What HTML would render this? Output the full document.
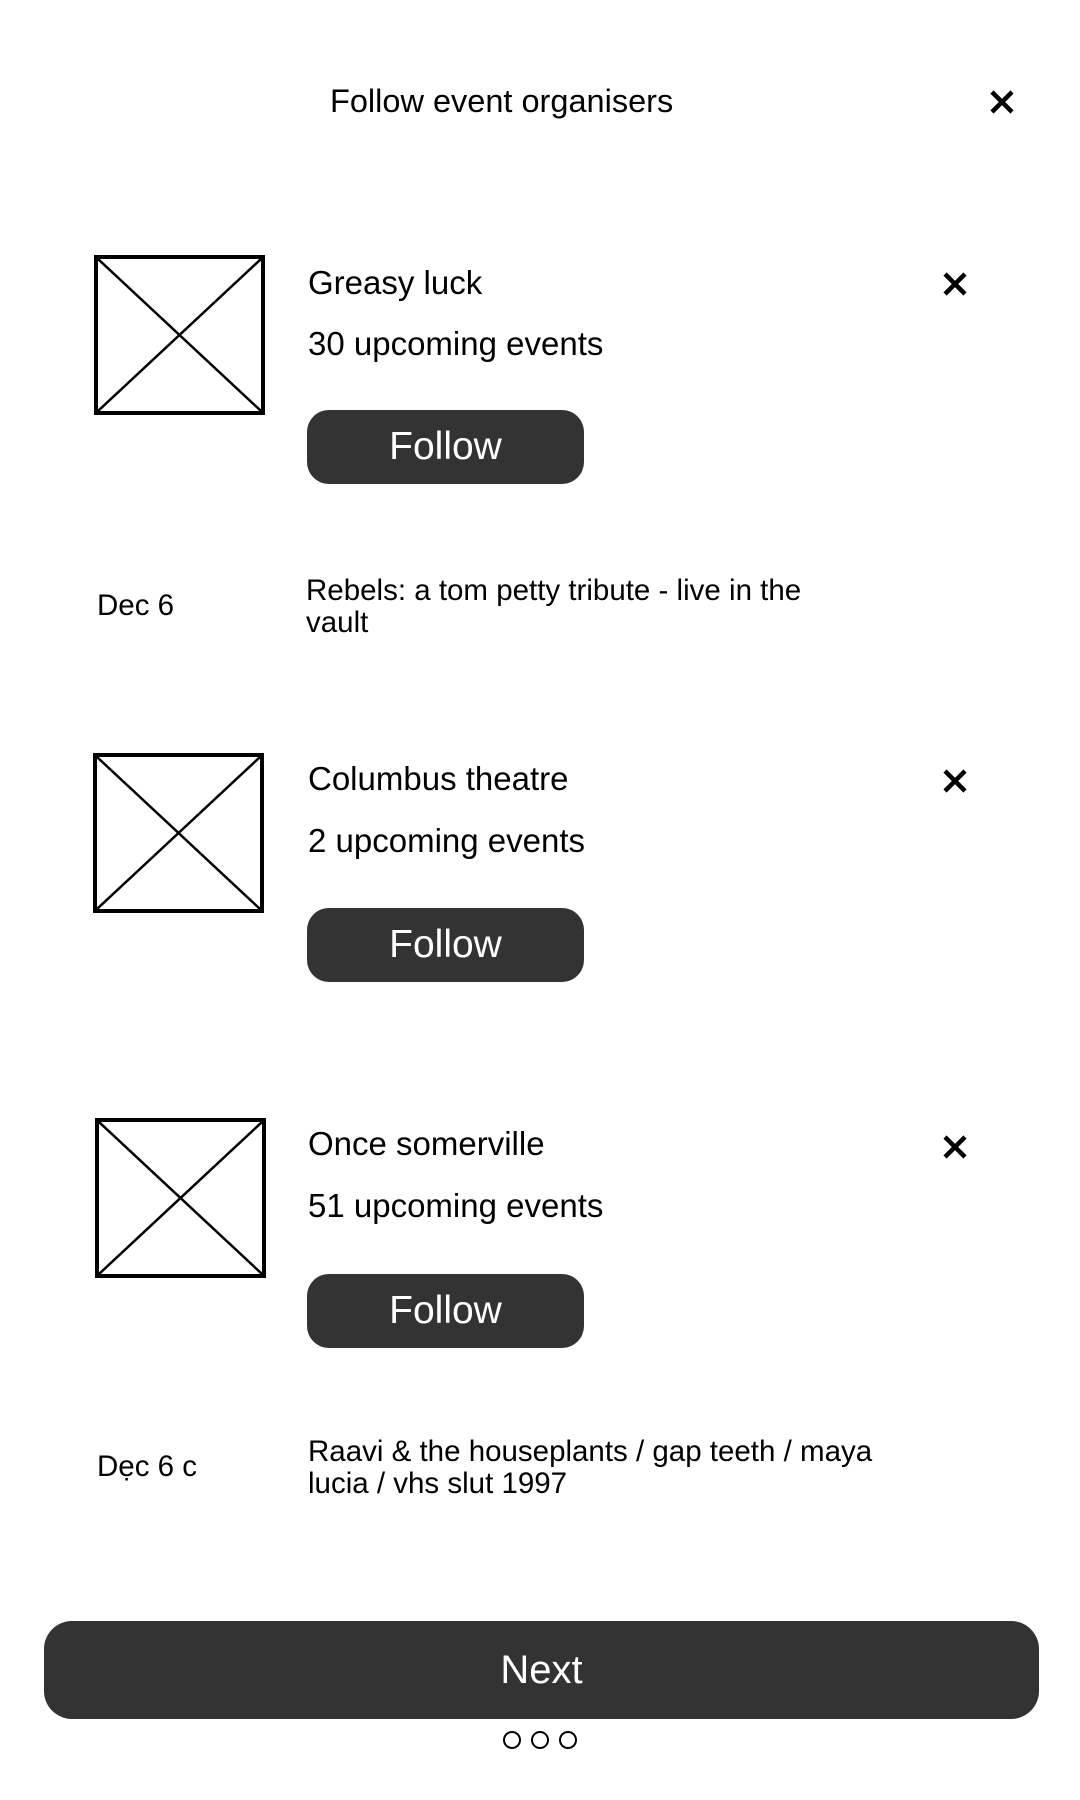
<!DOCTYPE html>
<html><head><meta charset="utf-8"><style>
*{margin:0;padding:0;box-sizing:border-box}
body{width:1080px;height:1800px;background:#fff;position:relative;font-family:"Liberation Sans",sans-serif;color:#000;overflow:hidden}
.a{position:absolute;white-space:nowrap}
.box{position:absolute;width:171px;height:160px;border:4px solid #000}
.box svg{position:absolute;left:0;top:0}
.btn{position:absolute;left:307px;width:277px;height:74px;background:#333;border-radius:22px;color:#fff;font-size:39px;text-align:center;line-height:74px}
.x{position:absolute;width:26px;height:26px}
.t{font-size:33px;line-height:36px}
.s{font-size:29.5px;line-height:32px}
.dot{position:absolute;top:1731px;width:18px;height:18px;border:2.5px solid #000;border-radius:50%}
</style></head><body>
<div class="a" style="left:330px;top:83px;font-size:32.5px;line-height:36px">Follow event organisers</div>
<svg class="x" style="left:989px;top:89px" viewBox="0 0 26 26"><path d="M3 3L23 23M23 3L3 23" stroke="#000" stroke-width="4.5"/></svg>

<div class="box" style="left:94px;top:255px"><svg width="163" height="152"><path d="M0 0L163 152M163 0L0 152" stroke="#000" stroke-width="2.5"/></svg></div>
<div class="a t" style="left:308px;top:265px">Greasy luck</div>
<div class="a t" style="left:308px;top:326px">30 upcoming events</div>
<div class="btn" style="top:410px">Follow</div>
<svg class="x" style="left:942px;top:271px" viewBox="0 0 26 26"><path d="M3 3L23 23M23 3L3 23" stroke="#000" stroke-width="4.5"/></svg>
<div class="a s" style="left:97px;top:590px">Dec 6</div>
<div class="a s" style="left:306px;top:575px">Rebels: a tom petty tribute - live in the<br>vault</div>

<div class="box" style="left:93px;top:753px"><svg width="163" height="152"><path d="M0 0L163 152M163 0L0 152" stroke="#000" stroke-width="2.5"/></svg></div>
<div class="a t" style="left:308px;top:761px">Columbus theatre</div>
<div class="a t" style="left:308px;top:823px">2 upcoming events</div>
<div class="btn" style="top:908px">Follow</div>
<svg class="x" style="left:942px;top:768px" viewBox="0 0 26 26"><path d="M3 3L23 23M23 3L3 23" stroke="#000" stroke-width="4.5"/></svg>

<div class="box" style="left:95px;top:1118px"><svg width="163" height="152"><path d="M0 0L163 152M163 0L0 152" stroke="#000" stroke-width="2.5"/></svg></div>
<div class="a t" style="left:308px;top:1126px">Once somerville</div>
<div class="a t" style="left:308px;top:1188px">51 upcoming events</div>
<div class="btn" style="top:1274px">Follow</div>
<svg class="x" style="left:942px;top:1134px" viewBox="0 0 26 26"><path d="M3 3L23 23M23 3L3 23" stroke="#000" stroke-width="4.5"/></svg>
<div class="a s" style="left:97px;top:1451px">Dẹc 6 c</div>
<div class="a s" style="left:308px;top:1436px">Raavi &amp; the houseplants / gap teeth / maya<br>lucia / vhs slut 1997</div>

<div class="a" style="left:44px;top:1621px;width:995px;height:98px;background:#333;border-radius:28px;color:#fff;font-size:40px;line-height:98px;text-align:center">Next</div>
<div class="dot" style="left:503px"></div>
<div class="dot" style="left:531px"></div>
<div class="dot" style="left:559px"></div>
</body></html>
